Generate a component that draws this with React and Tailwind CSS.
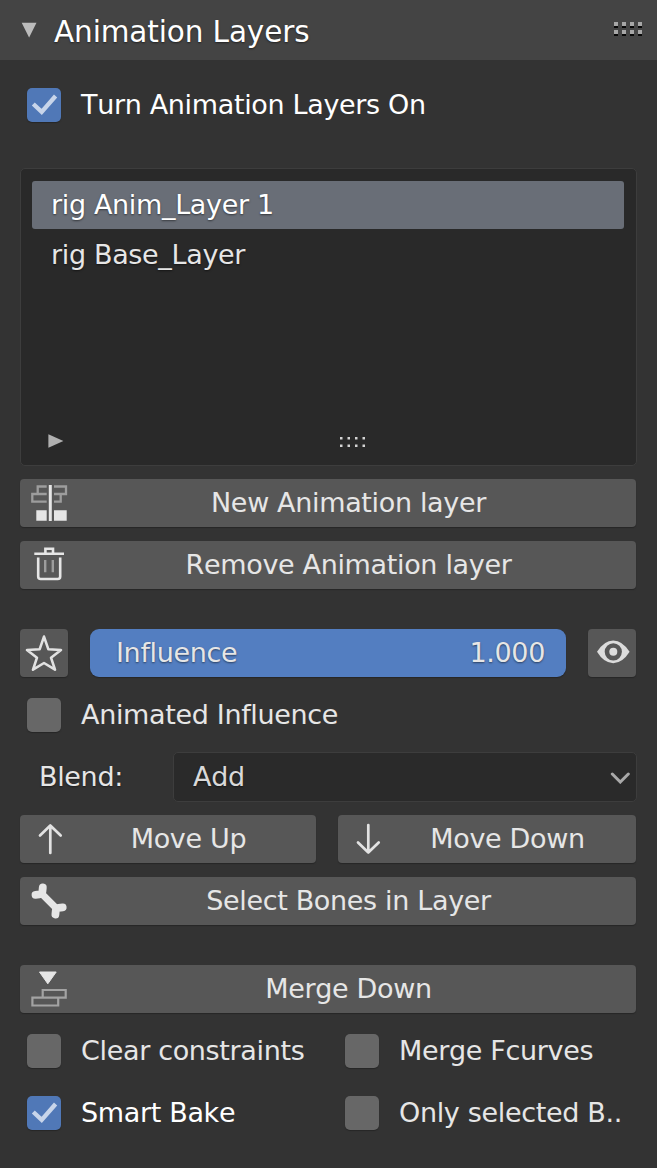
import React, { useState } from "react";

const NewLayerIcon = () => (
  <svg viewBox="0 0 48 48" className="h-12 w-12 shrink-0" fill="none">
    <g stroke="#9d9d9d" strokeWidth="2.3">
      <path d="M26.7 7.5H17.7V15H26.7M17.7 15H12.3V22.7H26.7" />
      <path d="M34 7.5H46V15H34M40.7 15V22.7H34" />
    </g>
    <path d="M28.8 6h3v36h-3zM16.3 31.3h10.4v10.4H16.3zM34 31.3h12.7v10.4H34z" fill="#e6e6e6" />
  </svg>
);

const TrashIcon = () => (
  <svg viewBox="0 0 48 48" className="h-12 w-12 shrink-0" fill="none">
    <path
      d="M14.3 12.8H44M25.4 12V7.8H33V12M18.2 16.5V35.5Q18.2 38 20.7 38H37.7Q40.2 38 40.2 35.5V16.5"
      stroke="#e6e6e6"
      strokeWidth="2.6"
    />
    <path d="M25.2 19V31.3M32.8 19V31.3" stroke="#9d9d9d" strokeWidth="2.4" />
  </svg>
);

const StarIcon = () => (
  <svg viewBox="0 0 48 48" className="h-12 w-12 shrink-0" fill="none">
    <path
      d="M24 7.6L28.3 20.2L41 21L31 28.7L35 40.7L24 34L13 40.7L17 28.7L7 21L19.7 20.2Z"
      stroke="#e2e2e2"
      strokeWidth="2.6"
      strokeLinejoin="round"
    />
  </svg>
);

const EyeIcon = () => (
  <svg viewBox="0 0 48 48" className="h-12 w-12 shrink-0">
    <path d="M9 22.8Q16 11.4 25.2 11.4T41.6 22.8Q34.4 34.2 25.2 34.2T9 22.8Z" fill="#dcdcdc" />
    <circle cx="25.3" cy="22.8" r="8.6" fill="#575757" />
    <circle cx="25.3" cy="22.8" r="4" fill="#dcdcdc" />
  </svg>
);

const ArrowUpIcon = () => (
  <svg viewBox="0 0 48 48" className="h-12 w-12 shrink-0" fill="none">
    <path
      d="M30.3 38V10.5M20 20.5L30.3 10.5L40.7 20.5"
      stroke="#e2e2e2"
      strokeWidth="2.7"
      strokeLinecap="round"
      strokeLinejoin="round"
    />
  </svg>
);

const ArrowDownIcon = () => (
  <svg viewBox="0 0 48 48" className="h-12 w-12 shrink-0" fill="none">
    <path
      d="M30.3 10V37.5M20 27.5L30.3 37.5L40.7 27.5"
      stroke="#e2e2e2"
      strokeWidth="2.7"
      strokeLinecap="round"
      strokeLinejoin="round"
    />
  </svg>
);

const BoneIcon = () => (
  <svg viewBox="0 0 48 48" className="h-12 w-12 shrink-0" fill="none">
    <g stroke="#e6e6e6" strokeLinecap="round">
      <path d="M21.5 16.5L36.5 31.5" strokeWidth="6.8" />
      <path d="M22.8 10.5L22.4 14.5M15.5 17.8L19.5 17.4M42.7 30.3L38.5 30.8M35.4 37.5L35.8 33.5" strokeWidth="7.8" />
    </g>
  </svg>
);

const MergeIcon = () => (
  <svg viewBox="0 0 48 48" className="h-12 w-12 shrink-0" fill="none">
    <path d="M19.5 7H36.2L27.8 18.8Z" fill="#e6e6e6" stroke="#e6e6e6" strokeLinejoin="round" />
    <path d="M22.7 25H45.7V32.7H22.7ZM12.4 32.7H38.2V40.5H12.4Z" stroke="#a3a3a3" strokeWidth="2.2" />
  </svg>
);

const Button = ({ icon, children, className = "" }) => (
  <button
    className={`flex h-12 items-center rounded-[4px] bg-[#575757] text-[#e6e6e6] shadow-[0_1px_1px_#262626] ${className}`}
  >
    {icon}
    <span className="-ml-[7px] flex-1 pb-px text-center">{children}</span>
  </button>
);

const Checkbox = ({ label, defaultChecked = false }) => {
  const [checked, setChecked] = useState(defaultChecked);

  return (
    <button
      role="checkbox"
      aria-checked={checked}
      onClick={() => setChecked(!checked)}
      className={`flex h-12 flex-1 items-center pl-[7px] ${checked ? "text-white" : "text-[#e6e6e6]"}`}
    >
      <span
        className={`mr-5 h-[34px] w-[34px] shrink-0 rounded-[5px] shadow-[0_1px_1px_#262626] ${
          checked ? "bg-[#5078b7]" : "bg-[#676767]"
        }`}
      >
        {checked && (
          <svg viewBox="0 0 34 34" className="h-full w-full" fill="none">
            <path d="M6.3 16L14.7 23.9L28.6 8" stroke="#c8d5ea" strokeWidth="4.3" />
          </svg>
        )}
      </span>
      <span className="pb-px">{label}</span>
    </button>
  );
};

const layers = ["rig Anim_Layer 1", "rig Base_Layer"];

const App = () => {
  const [active, setActive] = useState(0);

  return (
    <div className="min-h-screen w-full bg-[#333333] font-['DejaVu_Sans',sans-serif] text-[27px] leading-none tracking-[-0.34px] whitespace-nowrap text-[#e6e6e6] [font-kerning:none] [font-variant-ligatures:none] [text-shadow:0_1px_2px_rgba(0,0,0,0.5)]">
      {/* Panel header */}
      <div className="flex h-[60px] items-center bg-[#444444] pr-[15px] pl-[21px]">
        <svg viewBox="0 0 16 16" className="mr-[17px] h-4 w-4">
          <path d="M0.7 0.7H15.5L8.1 15.5Z" fill="#bcbcbc" />
        </svg>
        <h1 className="flex-1 pt-[5px] text-[29.5px] tracking-[-0.12px] text-white">Animation Layers</h1>
        <svg viewBox="0 0 28 14" className="mb-0.5 h-3.5 w-7" shapeRendering="crispEdges">
          {[0, 8, 16, 24].map((x) => (
            <g key={x}>
              <path d={`M${x} 0h4v4h-4zM${x} 8h4v4h-4z`} fill="#a6a6a6" />
              <path d={`M${x} 4h4v2h-4zM${x} 12h4v2h-4z`} fill="#080808" />
            </g>
          ))}
        </svg>
      </div>

      <div className="flex flex-col px-5 pt-[21px] pr-[21px]">
        <div className="flex">
          <Checkbox label="Turn Animation Layers On" defaultChecked />
        </div>

        {/* Layer list */}
        <div className="mt-[39px] -mr-px flex h-[298px] flex-col rounded-[5px] border border-[#3d3d3d] bg-[#292929] py-3 pr-3 pb-[11px] pl-[11px]">
          {layers.map((layer, index) => (
            <div
              key={layer}
              onClick={() => setActive(index)}
              className={`mb-0.5 flex h-12 items-center rounded-[3px] pb-px pl-[19px] ${
                index === active ? "bg-[#696e77] text-white" : ""
              }`}
            >
              {layer}
            </div>
          ))}
          <div className="mt-auto flex h-6 items-center pl-4">
            <svg viewBox="0 0 16 14" className="mb-0.5 h-3.5 w-4">
              <path d="M0.4 0.2L15.4 7L0.4 13.8Z" fill="#b0b0b0" />
            </svg>
            <svg viewBox="0 0 26 10" className="ml-[276px] h-2.5 w-[26px]">
              {[0, 7.5, 15, 22.5].map((x) => (
                <path key={x} d={`M${x} 0h2.5v2.5h-2.5zM${x} 7.5h2.5v2.5h-2.5z`} fill="#d4d4d4" />
              ))}
            </svg>
          </div>
        </div>

        <div className="mt-[13px] flex flex-col gap-3.5">
          <Button icon={<NewLayerIcon />}>New Animation layer</Button>
          <Button icon={<TrashIcon />}>Remove Animation layer</Button>
        </div>

        <div className="mt-10 flex flex-col gap-3.5">
          <div className="flex">
            <button className="h-12 w-12 rounded-[4px] bg-[#575757] shadow-[0_1px_1px_#262626]">
              <StarIcon />
            </button>
            <div className="mx-[22px] flex h-12 flex-1 items-center justify-between rounded-[9px] bg-[#537ec1] pr-[21px] pb-px pl-[26px] shadow-[0_1px_1px_#262626]">
              <span>Influence</span>
              <span>1.000</span>
            </div>
            <button className="h-12 w-12 rounded-[4px] bg-[#575757] shadow-[0_1px_1px_#262626]">
              <EyeIcon />
            </button>
          </div>

          <div className="flex">
            <Checkbox label="Animated Influence" />
          </div>

          <div className="flex items-center">
            <span className="w-[153px] pb-px pl-[19px]">Blend:</span>
            <div className="-my-px -mr-px flex h-[50px] flex-1 items-center justify-between rounded-[5px] border border-[#3d3d3d] bg-[#2a2a2a] pr-1.5 pl-[19px] text-[#d9d9d9]">
              <span className="pb-px">Add</span>
              <svg viewBox="0 0 20 12" className="mt-0.5 h-3 w-5" fill="none">
                <path
                  d="M2.3 2L10.3 10L18.3 2"
                  stroke="#a9a9a9"
                  strokeWidth="3"
                  strokeLinecap="round"
                />
              </svg>
            </div>
          </div>

          <div className="flex gap-[22px]">
            <Button icon={<ArrowUpIcon />} className="w-[296px]">
              Move Up
            </Button>
            <Button icon={<ArrowDownIcon />} className="flex-1">
              Move Down
            </Button>
          </div>

          <Button icon={<BoneIcon />}>Select Bones in Layer</Button>
        </div>

        {/* Merge / bake */}
        <div className="mt-10 flex flex-col gap-3.5">
          <Button icon={<MergeIcon />}>Merge Down</Button>
          <div className="grid grid-cols-[318px_1fr] gap-y-3.5">
            <Checkbox label="Clear constraints" />
            <Checkbox label="Merge Fcurves" />
            <Checkbox label="Smart Bake" defaultChecked />
            <Checkbox label="Only selected B.." />
          </div>
        </div>
      </div>
    </div>
  );
};

export default App;
